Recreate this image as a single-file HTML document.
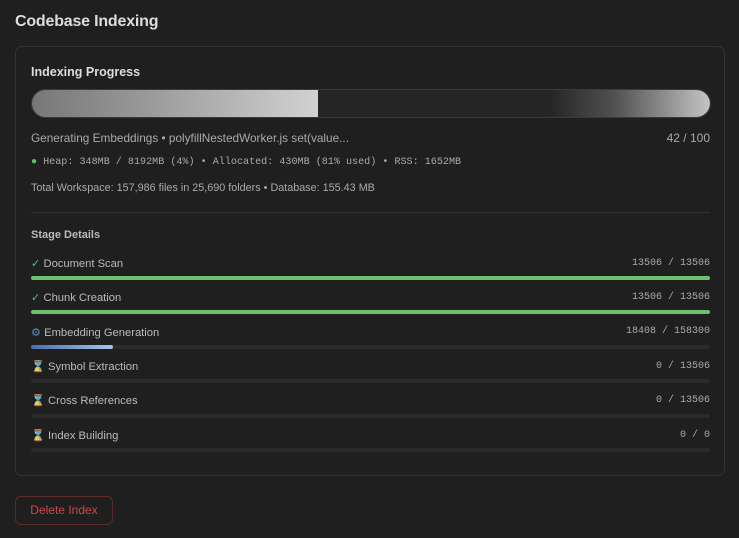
<!DOCTYPE html>
<html><head><style>
*{margin:0;padding:0;box-sizing:border-box}
body{width:739px;height:538px;background:#1f1f1f;font-family:"Liberation Sans",sans-serif;color:#ccc;position:relative;overflow:hidden}
.abs{position:absolute}
h1{position:absolute;left:15px;top:13px;font-size:16px;font-weight:bold;color:#ddd;letter-spacing:-0.2px}
.card{position:absolute;left:15px;top:46px;width:710px;height:430px;border:1px solid #333;border-radius:7px;background:#1f1f1f}
.t{position:absolute;white-space:nowrap}
.mono{font-family:"Liberation Mono",monospace}
.bar{position:absolute;left:31px;width:679px;height:4px;border-radius:2px;background:#2a2a2a}
.fill{height:100%;border-radius:2px}
.lbl{position:absolute;left:31px;font-size:11.2px;color:#bbb}
.cnt{position:absolute;right:29px;font-size:10px;color:#aaa;font-family:"Liberation Mono",monospace}
.hg{color:#e0d0a8}
</style></head><body>
<h1>Codebase Indexing</h1>
<div class="card"></div>
<div class="t" style="left:31px;top:65px;font-size:12.5px;font-weight:bold;color:#ddd">Indexing Progress</div>
<div class="abs" style="left:31px;top:89px;width:680px;height:29px;border-radius:15px;background:#252525;border:1px solid #3a3a3a;overflow:hidden">
 <div class="abs" style="left:0;top:0;width:286px;height:100%;background:linear-gradient(90deg,#777,#999 40%,#d2d2d2)"></div>
 <div class="abs" style="right:0;top:0;width:160px;height:100%;background:linear-gradient(90deg,rgba(200,200,200,0),rgba(110,110,110,.6) 40%,#c4c4c4);border-radius:0 15px 15px 0"></div>
</div>
<div class="t" style="left:31px;top:131px;font-size:11.8px;color:#aaa">Generating Embeddings • polyfillNestedWorker.js set(value...</div>
<div class="t" style="right:29px;top:131px;font-size:12px;color:#aaa">42 / 100</div>
<div class="t mono" style="left:31px;top:157px;font-size:10.1px;color:#aaa"><span style="color:#5fbf6a">●</span> Heap: 348MB / 8192MB (4%) • Allocated: 430MB (81% used) • RSS: 1652MB</div>
<div class="t" style="left:31px;top:182px;font-size:10.8px;color:#aaa">Total Workspace: 157,986 files in 25,690 folders • Database: 155.43 MB</div>
<div class="abs" style="left:31px;top:212px;width:679px;height:1px;background:#333"></div>
<div class="t" style="left:31px;top:229px;font-size:11px;font-weight:bold;color:#bbb">Stage Details</div>

<div class="lbl" style="top:257px"><span style="color:#5fbf6a">✓</span> Document Scan</div>
<div class="cnt" style="top:258px">13506 / 13506</div>
<div class="bar" style="top:276px"><div class="fill" style="width:100%;background:#6cc070"></div></div>

<div class="lbl" style="top:291px"><span style="color:#5fbf6a">✓</span> Chunk Creation</div>
<div class="cnt" style="top:292px">13506 / 13506</div>
<div class="bar" style="top:310px"><div class="fill" style="width:100%;background:#6cc070"></div></div>

<div class="lbl" style="top:326px"><span style="color:#5a8fd0">⚙</span> Embedding Generation</div>
<div class="cnt" style="top:326px">18408 / 158300</div>
<div class="bar" style="top:345px"><div class="fill" style="width:82px;background:linear-gradient(90deg,#4a6eaa,#a8c4ea)"></div></div>

<div class="lbl" style="top:360px"><span class="hg">⌛</span> Symbol Extraction</div>
<div class="cnt" style="top:361px">0 / 13506</div>
<div class="bar" style="top:379px"></div>

<div class="lbl" style="top:394px"><span class="hg">⌛</span> Cross References</div>
<div class="cnt" style="top:395px">0 / 13506</div>
<div class="bar" style="top:414px"></div>

<div class="lbl" style="top:429px"><span class="hg">⌛</span> Index Building</div>
<div class="cnt" style="top:430px">0 / 0</div>
<div class="bar" style="top:448px"></div>

<div class="abs" style="left:15px;top:496px;width:98px;height:29px;border:1px solid #5a2c2c;border-radius:6px;color:#c84a4a;font-size:12px;text-align:center;line-height:27px">Delete Index</div>
</body></html>
